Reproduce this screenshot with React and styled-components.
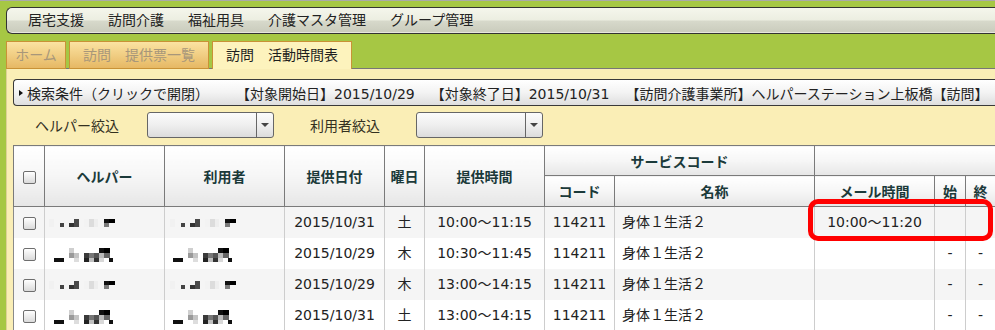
import React from "react";
import styled, { createGlobalStyle } from "styled-components";

const GlobalStyle = createGlobalStyle`
  html, body {
    margin: 0;
    padding: 0;
    overflow: hidden;
    background: #a6c744;
  }
  body {
    font-family: "DejaVu Sans", "Noto Sans CJK JP", sans-serif;
    font-size: 14px;
    color: #222;
  }
`;

const Page = styled.div`
  width: 1040px;
  height: 330px;
  overflow: hidden;
  border-top: 1px solid #a9a9a9;
  padding: 6px 0 0 6px;
  box-sizing: border-box;
`;

const MenuBar = styled.div`
  display: flex;
  height: 25px;
  padding-left: 9px;
  border: 1px solid #333;
  border-right: none;
  border-radius: 6px 0 0 6px;
  background: linear-gradient(#f5f6ec 0%, #eceee1 48%, #d7d9cb 52%, #c9cbbc 100%);
  box-shadow: inset 0 -1px 0 #e6e6de;
`;

const MenuItem = styled.div`
  padding: 0 12px;
  line-height: 25px;
  font-size: 14px;
  color: #222;
  white-space: nowrap;
`;

const TabRow = styled.div`
  display: flex;
  gap: 3px;
  margin-top: 7px;
  margin-bottom: -1px;
  position: relative;
  z-index: 1;
`;

const Tab = styled.div`
  width: ${(p) => p.$width}px;
  height: 28px;
  box-sizing: border-box;
  border: 1px solid #c99236;
  border-bottom: ${(p) => (p.$active ? "none" : "1px solid #c99236")};
  text-align: center;
  line-height: 26px;
  font-size: 14px;
  white-space: nowrap;
  color: ${(p) => (p.$active ? "#1e1e1e" : "#a8977a")};
  background: ${(p) =>
    p.$active ? "#fdf3bd" : "linear-gradient(#fbe3a2, #e6b864)"};
`;

const Panel = styled.div`
  background: #faeeb6;
  border-top: 1px solid #777;
  border-left: 1px solid #ddd197;
  padding: 10px 0 0 6px;
  min-height: 261px;
`;

const SearchBar = styled.div`
  display: flex;
  align-items: center;
  height: 25px;
  padding-left: 5px;
  border: 1px solid #3a3a3a;
  border-right: none;
  border-radius: 4px 0 0 4px;
  background: linear-gradient(#ffffff 0%, #f3f3f3 50%, #dedede 100%);
  white-space: nowrap;
  font-size: 14px;
  color: #222;
`;

const Caret = styled.span`
  width: 0;
  height: 0;
  border-top: 3.5px solid transparent;
  border-bottom: 3.5px solid transparent;
  border-left: 4px solid #111;
  margin-right: 4px;
`;

const Segment = styled.span`
  margin-left: ${(p) => p.$gap || 0}px;
`;

const FilterRow = styled.div`
  display: flex;
  align-items: center;
  height: 26px;
  margin-top: 6px;
`;

const FilterLabel = styled.div`
  margin-left: ${(p) => p.$indent}px;
  width: ${(p) => p.$width}px;
  font-size: 14px;
  color: #33301f;
  white-space: nowrap;
`;

const Select = styled.div`
  display: flex;
  width: 127px;
  height: 26px;
  box-sizing: border-box;
  border: 1px solid #666;
  border-radius: 3px;
  background: linear-gradient(#fbfbfb 0%, #efefef 50%, #dcdcdc 100%);
`;

const SelectValue = styled.div`
  flex: 1;
`;

const SelectArrow = styled.div`
  width: 16px;
  border-left: 1px solid #666;
  display: flex;
  align-items: center;
  justify-content: center;
  &::after {
    content: "";
    border-left: 4px solid transparent;
    border-right: 4px solid transparent;
    border-top: 4px solid #444;
  }
`;

const TableWrap = styled.div`
  position: relative;
  margin-top: 7px;
`;

const Table = styled.table`
  border-collapse: collapse;
  table-layout: fixed;
  width: 982px;
  font-size: 14px;
`;

const Th = styled.th`
  height: ${(p) => p.$h || 29}px;
  padding: 0;
  border: 1px solid #7a7a7a;
  background: linear-gradient(#ffffff 0%, #f6f6f6 50%, #e6e6e6 100%);
  font-weight: bold;
  color: #1b3a3a;
  text-align: center;
  white-space: nowrap;
`;

const Tr = styled.tr`
  background: ${(p) => (p.$alt ? "#f5f5f5" : "#ffffff")};
`;

const Td = styled.td`
  height: 31px;
  padding: 0 ${(p) => (p.$left ? 7 : 0)}px;
  border-left: 1px solid ${(p) => (p.$first ? "#8a8a8a" : "#cdcdcd")};
  border-right: 1px solid #cdcdcd;
  text-align: ${(p) => (p.$left ? "left" : "center")};
  white-space: nowrap;
  color: #222;
  line-height: 31px;
`;

const CheckBox = styled.span`
  display: inline-block;
  vertical-align: middle;
  width: 13px;
  height: 13px;
  box-sizing: border-box;
  border: 1px solid #6e6e6e;
  border-radius: 2px;
  background: linear-gradient(#ffffff, #dadada);
`;

const Highlight = styled.div`
  position: absolute;
  left: 795px;
  top: 54px;
  width: 185px;
  height: 42px;
  box-sizing: border-box;
  border: 5px solid #ff0000;
  border-radius: 10px;
`;

const MosaicSvg = styled.svg`
  display: block;
  margin-left: ${(p) => p.$shift}px;
`;

// pixelated (blurred) personal names
const patternA = [
  [0, 4, 5, 8, "#f1f1f1"],
  [11, 8, 4, 4, "#444"],
  [20, 8, 5, 4, "#333"],
  [25, 4, 5, 8, "#4a4a4a"],
  [35, 4, 5, 8, "#f3f3f3"],
  [40, 4, 5, 8, "#dcdcdc"],
  [45, 4, 4, 8, "#eeeeee"],
  [55, 4, 5, 4, "#111"],
  [60, 4, 6, 4, "#000"],
  [55, 8, 5, 4, "#7a7a7a"],
];

const patternB = [
  [0, 12, 10, 4, "#111"],
  [15, 2, 5, 5, "#cfcfcf"],
  [15, 7, 5, 5, "#9a9a9a"],
  [20, 7, 5, 5, "#c4c4c4"],
  [20, 12, 5, 4, "#dddddd"],
  [30, 7, 5, 5, "#3a3a3a"],
  [30, 12, 5, 4, "#222"],
  [35, 7, 5, 5, "#777"],
  [35, 12, 5, 4, "#c0c0c0"],
  [40, 7, 5, 5, "#555"],
  [40, 12, 5, 4, "#333"],
  [45, 2, 5, 5, "#111"],
  [50, 2, 6, 5, "#000"],
  [45, 7, 5, 5, "#bbb"],
  [50, 7, 6, 5, "#666"],
  [45, 12, 5, 4, "#d8d8d8"],
  [55, 12, 4, 4, "#111"],
];

const Mosaic = ({ kind, shift }) => {
  const rects = kind === "a" ? patternA : patternB;
  return (
    <MosaicSvg $shift={shift} width="70" height="16" viewBox="0 0 70 16">
      {rects.map(([x, y, w, h, c], i) => (
        <rect key={i} x={x} y={y} width={w} height={h} fill={c} />
      ))}
    </MosaicSvg>
  );
};

const rows = [
  { date: "2015/10/31", day: "土", time: "10:00～11:15", mail: "10:00～11:20", s: "", e: "", kind: "a" },
  { date: "2015/10/29", day: "木", time: "10:30～11:45", mail: "", s: "-", e: "-", kind: "b" },
  { date: "2015/10/29", day: "木", time: "13:00～14:15", mail: "", s: "-", e: "-", kind: "a" },
  { date: "2015/10/31", day: "土", time: "13:00～14:15", mail: "", s: "-", e: "-", kind: "b" },
];

const menu = ["居宅支援", "訪問介護", "福祉用具", "介護マスタ管理", "グループ管理"];

export default function App() {
  return (
    <>
      <GlobalStyle />
      <Page>
        <MenuBar>
          {menu.map((m) => (
            <MenuItem key={m}>{m}</MenuItem>
          ))}
        </MenuBar>

        <TabRow>
          <Tab $width={60}>ホーム</Tab>
          <Tab $width={140}>訪問　提供票一覧</Tab>
          <Tab $width={140} $active>
            訪問　活動時間表
          </Tab>
        </TabRow>

        <Panel>
          <SearchBar>
            <Caret />
            <span>検索条件（クリックで開閉）</span>
            <Segment $gap={27}>【対象開始日】2015/10/29</Segment>
            <Segment $gap={16}>【対象終了日】2015/10/31</Segment>
            <Segment $gap={16}>【訪問介護事業所】ヘルパーステーション上板橋【訪問】</Segment>
          </SearchBar>

          <FilterRow>
            <FilterLabel $indent={22} $width={112}>
              ヘルパー絞込
            </FilterLabel>
            <Select>
              <SelectValue />
              <SelectArrow />
            </Select>
            <FilterLabel $indent={36} $width={106}>
              利用者絞込
            </FilterLabel>
            <Select>
              <SelectValue />
              <SelectArrow />
            </Select>
          </FilterRow>

          <TableWrap>
            <Table>
              <colgroup>
                <col style={{ width: 31 }} />
                <col style={{ width: 120 }} />
                <col style={{ width: 120 }} />
                <col style={{ width: 100 }} />
                <col style={{ width: 40 }} />
                <col style={{ width: 120 }} />
                <col style={{ width: 70 }} />
                <col style={{ width: 200 }} />
                <col style={{ width: 120 }} />
                <col style={{ width: 31 }} />
                <col style={{ width: 30 }} />
              </colgroup>
              <thead>
                <tr>
                  <Th rowSpan={2}>
                    <CheckBox />
                  </Th>
                  <Th rowSpan={2}>ヘルパー</Th>
                  <Th rowSpan={2}>利用者</Th>
                  <Th rowSpan={2}>提供日付</Th>
                  <Th rowSpan={2}>曜日</Th>
                  <Th rowSpan={2}>提供時間</Th>
                  <Th colSpan={2}>サービスコード</Th>
                  <Th colSpan={3} />
                </tr>
                <tr>
                  <Th $h={30}>コード</Th>
                  <Th $h={30}>名称</Th>
                  <Th $h={30}>メール時間</Th>
                  <Th $h={30}>始</Th>
                  <Th $h={30}>終</Th>
                </tr>
              </thead>
              <tbody>
                {rows.map((r, i) => (
                  <Tr key={i} $alt={i % 2 === 0}>
                    <Td $first>
                      <CheckBox />
                    </Td>
                    <Td>
                      <Mosaic kind={r.kind} shift={r.kind === "a" ? 4 : 9} />
                    </Td>
                    <Td>
                      <Mosaic kind={r.kind} shift={r.kind === "a" ? 5 : 8} />
                    </Td>
                    <Td>{r.date}</Td>
                    <Td>{r.day}</Td>
                    <Td>{r.time}</Td>
                    <Td>114211</Td>
                    <Td $left>身体１生活２</Td>
                    <Td>{r.mail}</Td>
                    <Td>{r.s}</Td>
                    <Td>{r.e}</Td>
                  </Tr>
                ))}
              </tbody>
            </Table>
            <Highlight />
          </TableWrap>
        </Panel>
      </Page>
    </>
  );
}
